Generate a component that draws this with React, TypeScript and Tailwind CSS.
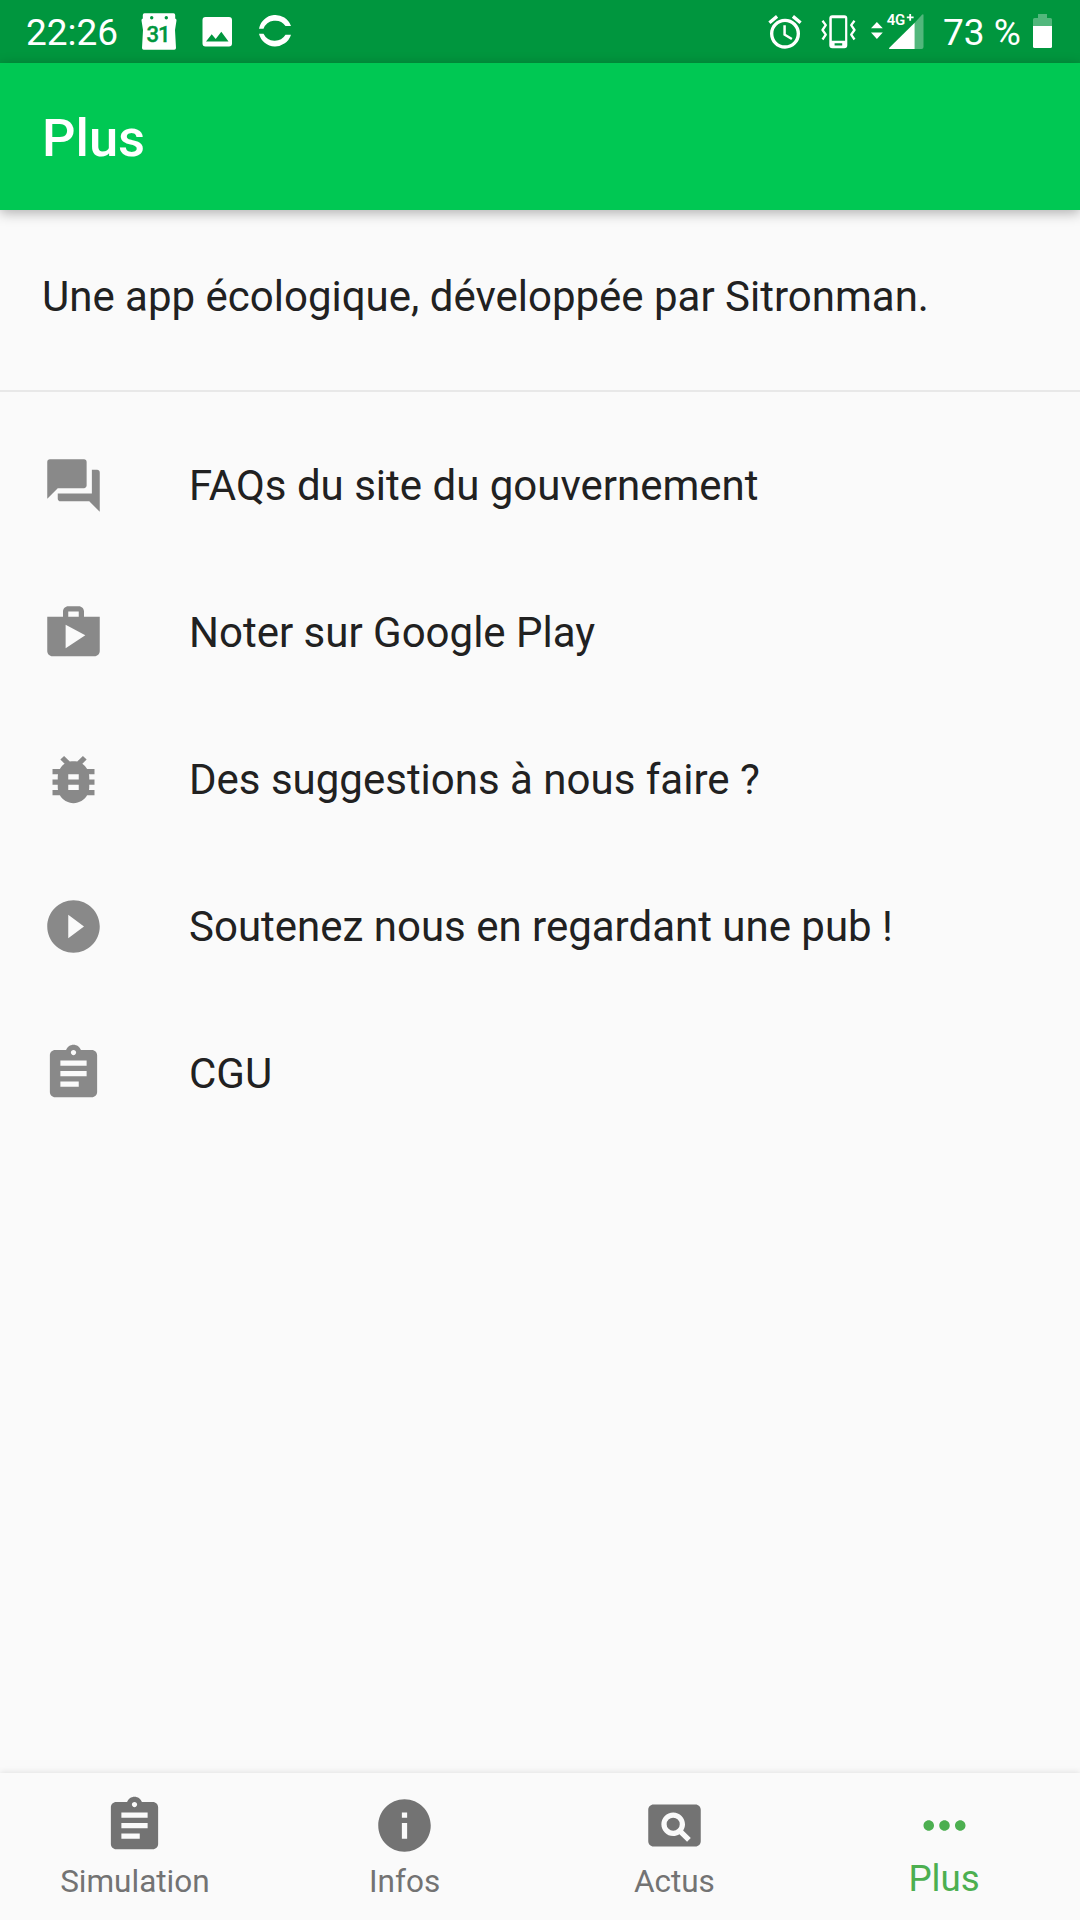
import React from "react";
import {
  MdAlarm,
  MdAssignment,
  MdBugReport,
  MdInfo,
  MdMoreHoriz,
  MdPageview,
  MdPlayCircleFilled,
  MdQuestionAnswer,
  MdShop,
} from "react-icons/md";

const links = [
  { label: "FAQs du site du gouvernement", Icon: MdQuestionAnswer },
  { label: "Noter sur Google Play", Icon: MdShop },
  { label: "Des suggestions à nous faire ?", Icon: MdBugReport },
  { label: "Soutenez nous en regardant une pub !", Icon: MdPlayCircleFilled },
  { label: "CGU", Icon: MdAssignment },
];

const tabs = [
  { label: "Simulation", Icon: MdAssignment },
  { label: "Infos", Icon: MdInfo },
  { label: "Actus", Icon: MdPageview },
  { label: "Plus", Icon: MdMoreHoriz, active: true },
];

function CalendarIcon() {
  return (
    <svg className="ml-[22px] h-[63px] w-9" viewBox="141 0 36 63">
      <path
        fill="#fff"
        d="M144.500 13.300h29q1.700 0 1.700 1.700v3.500q1.500.5 1.300 2l-1.500 9.500 1 18q0 1.700-1.700 1.700h-30.600q-1.700 0-1.700-1.700l1-18-1.500-9.500q-.2-1.500 1.300-2V15q0-1.700 1.700-1.700z"
      />
      <circle cx="151.700" cy="17.800" r="1.700" fill="#00963e" />
      <circle cx="166.300" cy="17.800" r="1.700" fill="#00963e" />
      <text
        x="158"
        y="42.300"
        fontSize="22"
        fontWeight="500"
        textAnchor="middle"
        letterSpacing="-1"
        fill="#00963e"
        stroke="#00963e"
        strokeWidth=".4"
      >
        31
      </text>
    </svg>
  );
}

function PictureIcon() {
  return (
    <svg className="ml-6 h-[63px] w-8" viewBox="201 0 32 63">
      <path
        fill="#fff"
        fillRule="evenodd"
        d="M205.500 17h23.500a3 3 0 0 1 3 3v23.500a3 3 0 0 1-3 3h-23.500a3 3 0 0 1-3-3V20a3 3 0 0 1 3-3zM206 41.500h22.500l-7.200-9.700-5.600 7.300-4-4.800z"
      />
    </svg>
  );
}

function SyncRingIcon() {
  return (
    <svg className="ml-[25px] h-[63px] w-[34px]" viewBox="258 0 34 63">
      <path
        fill="#fff"
        d="M259 28.800a16.600 16.600 0 0 1 32-2.800h-5.500a12.600 12.600 0 0 0-22 2.800zM259 33.700a16.600 16.600 0 0 0 32 1h-5.500a12.600 12.600 0 0 1-22-1z"
      />
    </svg>
  );
}

function VibrateIcon() {
  return (
    <svg className="ml-[15px] h-[63px] w-9" viewBox="820 0 36 63">
      <path
        fill="#fff"
        fillRule="evenodd"
        d="M832.300 15.300h12a3 3 0 0 1 3 3v27a3 3 0 0 1-3 3h-12a3 3 0 0 1-3-3v-27a3 3 0 0 1 3-3zM831.800 18.300v22.400h13.300V18.300zM834.600 43.200v2.300h7.600v-2.300z"
      />
      <path
        fill="none"
        stroke="#fff"
        strokeWidth="2.300"
        strokeLinejoin="round"
        d="M822.500 20.700l3.300 4.400-3.300 4.900 3.300 4.700-3.300 4.800M854.500 20.700l-3.300 4.400 3.300 4.900-3.300 4.700 3.300 4.800"
      />
    </svg>
  );
}

function SignalIcon() {
  return (
    <svg className="ml-[14px] h-[63px] w-[55px]" viewBox="870 0 55 63">
      <path fill="#fff" d="M871 28.300l5.900-6.300 5.900 6.300zM871 32.500l5.900 6.500 5.900-6.500z" />
      <path fill="#fff" d="M914.700 22.800V49h-24.500q-2 0-.6-1.500z" />
      <path
        fill="#fff"
        fillOpacity=".32"
        d="M914.700 22.800l7.300-8q1.500-1.200 1.500.8v31.400q0 2-2 2h-6.800z"
      />
      <text x="886.700" y="25" fontSize="15" fontWeight="600" letterSpacing="-.2" fill="#fff">
        4G
      </text>
      <path fill="#fff" d="M909.300 14h1.800v2.500h2.500v1.800h-2.500v2.500h-1.800v-2.500h-2.500v-1.800h2.500z" />
    </svg>
  );
}

function BatteryIcon() {
  return (
    <svg className="ml-[13px] h-[63px] w-5" viewBox="1033 0 20 63">
      <path
        fill="#fff"
        fillOpacity=".32"
        d="M1038 14h9v4h3.500q1.500 0 1.500 1.500V26h-19v-6.500q0-1.500 1.500-1.500h3.500z"
      />
      <path fill="#fff" d="M1033 26h19v20.500q0 1.500-1.500 1.500h-16q-1.500 0-1.500-1.500z" />
    </svg>
  );
}

function StatusBar() {
  return (
    <div className="flex h-[63px] items-center justify-between bg-[#00963e] pl-[26px] pr-[27px] text-[37px] text-white">
      <div className="flex items-center">
        <span className="w-[93px] whitespace-nowrap pt-[3px] leading-[60px]">22:26</span>
        <CalendarIcon />
        <PictureIcon />
        <SyncRingIcon />
      </div>
      <div className="flex items-center">
        <MdAlarm className="size-10" />
        <VibrateIcon />
        <SignalIcon />
        <span className="ml-[18px] w-[77px] whitespace-nowrap pt-[3px] leading-[60px]">73 %</span>
        <BatteryIcon />
      </div>
    </div>
  );
}

function App() {
  return (
    <div className="flex h-[1920px] w-[1080px] flex-col overflow-hidden bg-[#fafafa] font-[Roboto,sans-serif] text-[#212121]">
      <StatusBar />
      <header className="flex h-[147px] items-center bg-[#00c853] px-[42px] pt-[3px] shadow-[0_3px_12px_rgba(0,0,0,0.3)]">
        <h1 className="text-[52.5px] font-medium text-white">Plus</h1>
      </header>

      <main className="flex-1">
        <p className="flex h-[182px] items-center border-b-2 border-[#e8e8e8] px-[42px] pb-2 text-[42px]">
          Une app écologique, développée par Sitronman.
        </p>
        <ul className="pt-5">
          {links.map(({ label, Icon }) => (
            <li key={label} className="flex h-[147px] items-center gap-[84px] px-[42px]">
              <Icon className="size-[63px] text-[#898989]" />
              <span className="text-[42px]">{label}</span>
            </li>
          ))}
        </ul>
      </main>

      <nav className="grid h-[147px] grid-cols-4 pr-px shadow-[0_-1px_6px_rgba(0,0,0,0.1)]">
        {tabs.map(({ label, Icon, active }) => (
          <a
            key={label}
            className={
              active
                ? "flex flex-col items-center pt-[21px] text-[#4caf50]"
                : "flex flex-col items-center pt-[21px] text-[#737373]"
            }
          >
            <Icon className="size-[63px]" />
            <span
              className={
                active ? "text-[36.75px] leading-[44px]" : "pt-[5px] text-[31.5px] leading-[40px]"
              }
            >
              {label}
            </span>
          </a>
        ))}
      </nav>
    </div>
  );
}

export default App;
